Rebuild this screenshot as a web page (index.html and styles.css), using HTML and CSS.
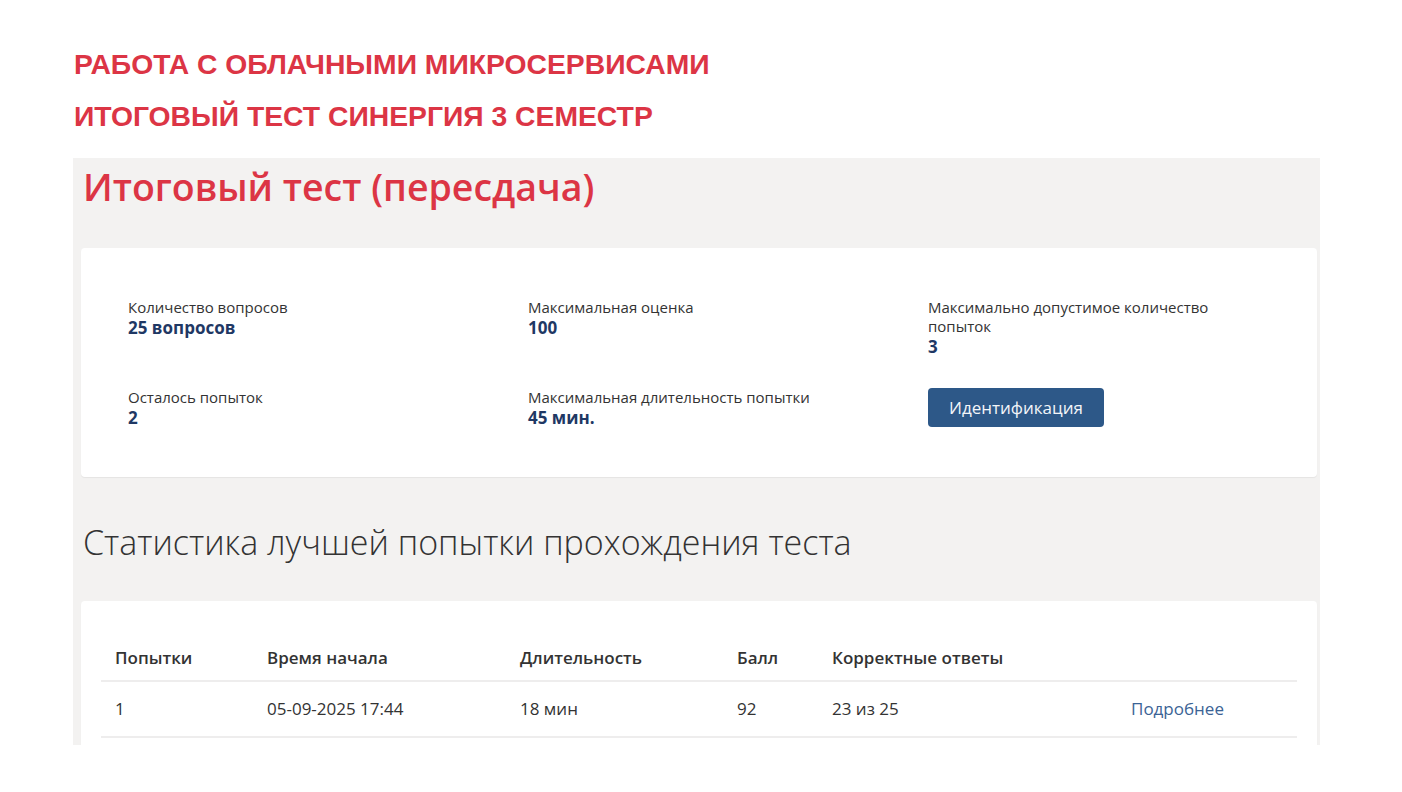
FILE: index.html
```html
<!DOCTYPE html>
<html lang="ru">
<head>
<meta charset="utf-8">
<title>Итоговый тест</title>
<link rel="stylesheet" href="styles.css">
</head>
<body>
<header class="top">
  <h1 class="top-title">РАБОТА С ОБЛАЧНЫМИ МИКРОСЕРВИСАМИ</h1>
  <h2 class="top-title second">ИТОГОВЫЙ ТЕСТ СИНЕРГИЯ 3 СЕМЕСТР</h2>
</header>
<main class="panel">
  <h2 class="test-title">Итоговый тест (пересдача)</h2>
  <section class="card info">
    <div class="info-item">
      <div class="label">Количество вопросов</div>
      <div class="value">25 вопросов</div>
    </div>
    <div class="info-item">
      <div class="label">Максимальная оценка</div>
      <div class="value">100</div>
    </div>
    <div class="info-item">
      <div class="label">Максимально допустимое количество попыток</div>
      <div class="value">3</div>
    </div>
    <div class="info-item">
      <div class="label">Осталось попыток</div>
      <div class="value">2</div>
    </div>
    <div class="info-item">
      <div class="label">Максимальная длительность попытки</div>
      <div class="value">45 мин.</div>
    </div>
    <div class="info-item">
      <button class="btn" type="button">Идентификация</button>
    </div>
  </section>
  <h2 class="stats-title">Статистика лучшей попытки прохождения теста</h2>
  <section class="card table-card">
    <table class="stats">
      <thead>
        <tr>
          <th class="c1">Попытки</th>
          <th class="c2">Время начала</th>
          <th class="c3">Длительность</th>
          <th class="c4">Балл</th>
          <th class="c5">Корректные ответы</th>
          <th class="c6"></th>
        </tr>
      </thead>
      <tbody>
        <tr>
          <td>1</td>
          <td>05-09-2025 17:44</td>
          <td>18 мин</td>
          <td>92</td>
          <td>23 из 25</td>
          <td><a class="more" href="#">Подробнее</a></td>
        </tr>
      </tbody>
    </table>
  </section>
</main>
</body>
</html>
```
FILE: styles.css
```css
html, body {
  margin: 0;
  padding: 0;
  background: #ffffff;
  height: 792px;
  overflow: hidden;
}
body {
  font-family: "Open Sans", "Noto Sans", sans-serif;
  color: #333;
}
.top {
  padding: 46px 0 0 74px;
}
.top-title {
  margin: 0;
  font-family: "Liberation Sans", Arial, sans-serif;
  font-weight: bold;
  font-size: 28.3px;
  line-height: 36px;
  color: #dc3545;
}
.top-title.second {
  margin-top: 16px;
}
.panel {
  margin: 24px 0 0 73px;
  width: 1236px;
  padding: 0 3px 0 8px;
  background: #f3f2f1;
  height: 587px;
  overflow: hidden;
}
.test-title {
  margin: 0;
  padding: 1px 0 0 2px;
  font-family: "Open Sans", sans-serif;
  font-weight: 600;
  font-size: 37.5px;
  line-height: 56px;
  color: #dc3545;
}
.card {
  background: #fff;
  border-radius: 4px;
  box-shadow: 0 1px 1px rgba(0,0,0,0.06);
}
.info {
  margin-top: 33px;
  padding: 50px 0 48px 47px;
  display: grid;
  grid-template-columns: 400px 400px 300px;
  row-gap: 30px;
}
.label {
  font-size: 15px;
  line-height: 19px;
  color: #333;
}
.value {
  font-size: 17px;
  line-height: 22px;
  font-weight: 700;
  color: #1f3864;
}
.btn {
  font-family: "Open Sans", sans-serif;
  font-size: 17px;
  color: #f3f5f8;
  background: #2d5888;
  border: none;
  border-radius: 4px;
  width: 176px;
  height: 39px;
  padding: 0;
}
.stats-title {
  margin: 0;
  padding: 43px 0 0 2px;
  font-family: "Open Sans", sans-serif;
  font-weight: 300;
  font-size: 34px;
  line-height: 44px;
  color: #333;
}
.table-card {
  margin-top: 37px;
  padding: 35px 20px 0 20px;
  height: 200px;
}
.stats {
  width: 100%;
  border-collapse: collapse;
  font-size: 17px;
  color: #333;
}
.stats th {
  text-align: left;
  font-weight: 600;
  padding: 12px 0 12px 14px;
  line-height: 20px;
  border-bottom: 2px solid #eeeded;
}
.stats td {
  padding: 17px 0 17px 14px;
  line-height: 20px;
  border-bottom: 2px solid #eeeded;
}
.c1 { width: 138px; }
.c2 { width: 239px; }
.c3 { width: 203px; }
.c4 { width: 81px; }
.c5 { width: 285px; }
.more {
  color: #3b6395;
  text-decoration: none;
}
```
